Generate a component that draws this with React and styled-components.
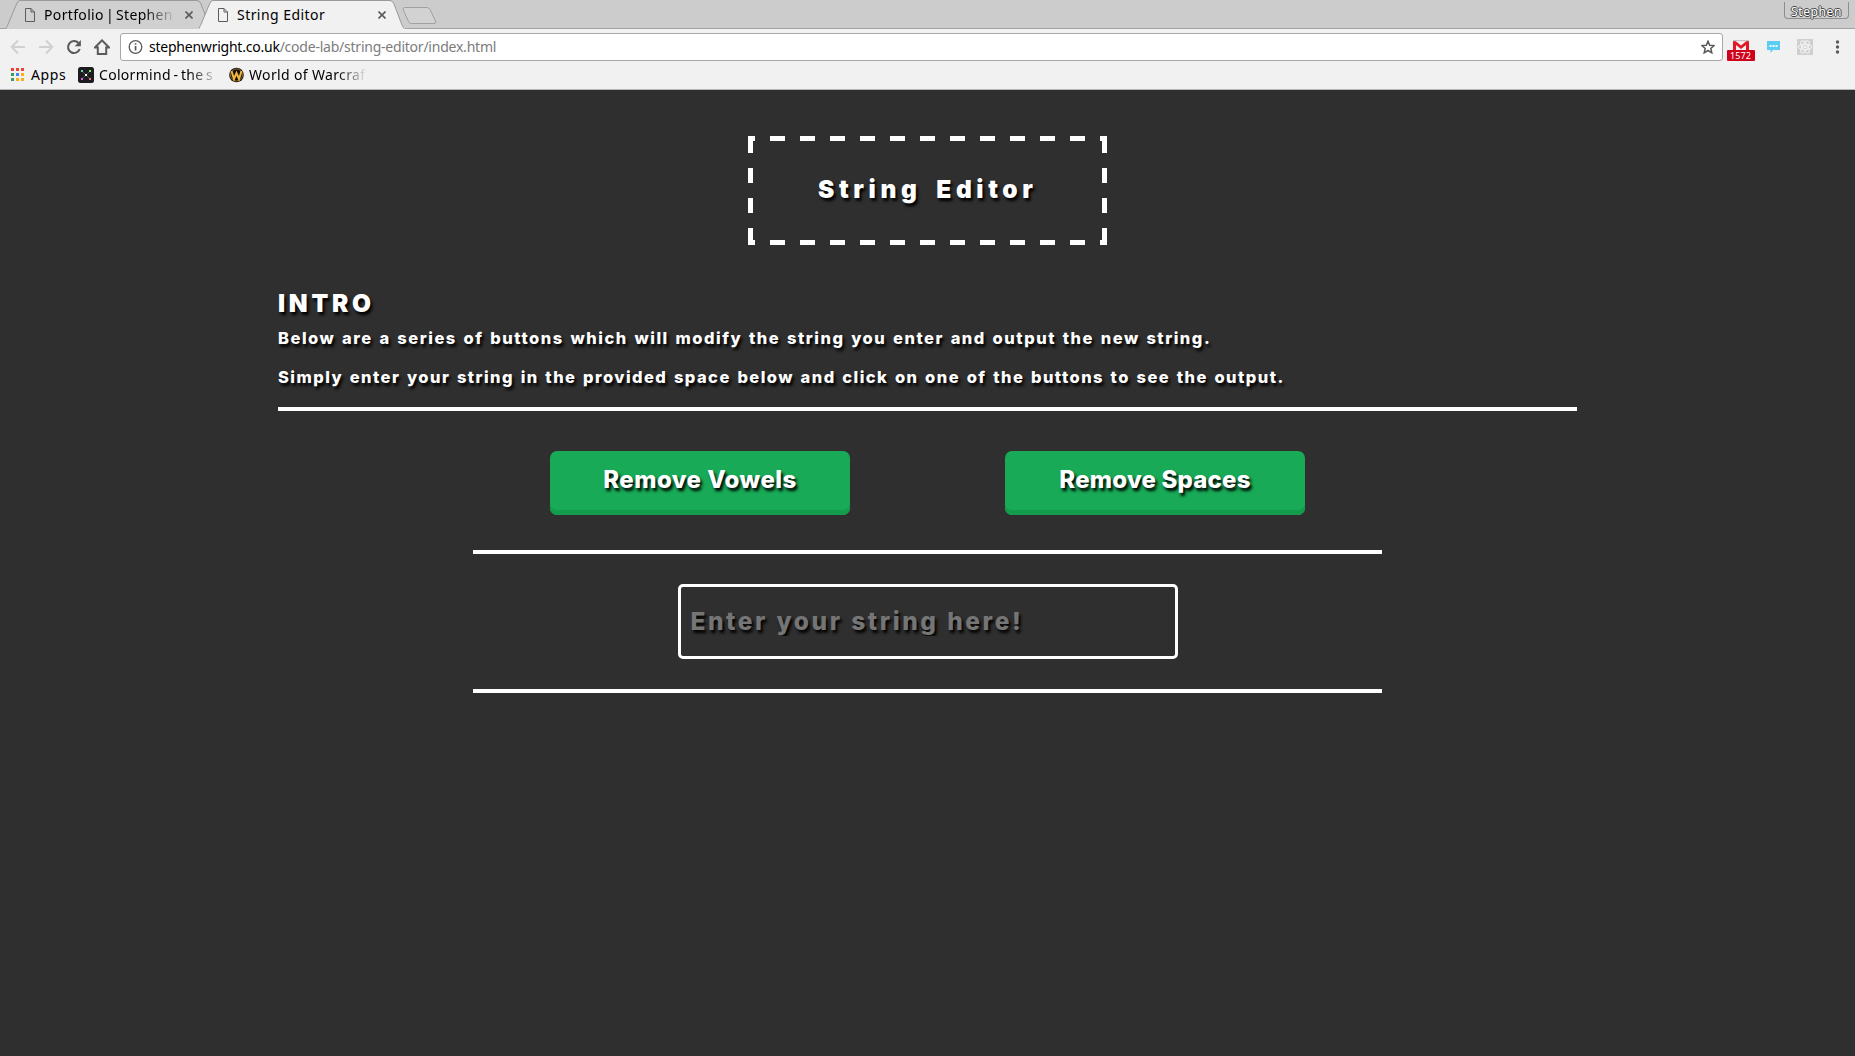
import React from "react";
import styled, { createGlobalStyle } from "styled-components";

const Global = createGlobalStyle`
  * { box-sizing: border-box; }
  body { margin: 0; background: #2f2f2f; overflow: hidden; }
  p, h1, h2 { margin: 0; }
`;

const Window = styled.div`
  height: 1056px;
  display: flex;
  flex-direction: column;
  background: #2f2f2f;
  font-family: "Noto Sans", "Open Sans", sans-serif;
  font-size: 14px;
  color: #000;
`;

const TabStrip = styled.header`
  height: 29px;
  flex: none;
  display: flex;
  padding-left: 6px;
  background: #ccc;
  border-bottom: 1px solid #a3a3a3;
`;

const Tab = styled.div`
  position: relative;
  z-index: ${(p) => (p.$active ? 2 : 1)};
  width: 206px;
  height: 29px;
  margin-right: -13px;
  padding: 0 14px 0 19px;
  display: flex;
  align-items: center;
  flex: none;
`;

const TabShape = styled.svg`
  position: absolute;
  inset: 0;
`;

const TabTitle = styled.span`
  position: relative;
  width: 132px;
  margin-left: 9px;
  line-height: 28px;
  white-space: nowrap;
  letter-spacing: ${(p) => p.$spacing};
  word-spacing: ${(p) => (p.$fade ? "-2px" : "0")};
  ${(p) => p.$fade && "mask-image: linear-gradient(90deg, #000 100px, transparent 132px);"}
`;

const Glyph = styled.svg`
  position: relative;
  flex: none;
  display: block;
`;

const NewTab = styled(Glyph)`
  margin: 6px 0 0 10px;
`;

const Profile = styled.div`
  margin: 2px 6px 0 auto;
  width: 65px;
  height: 17px;
  border: 1px solid #8e8e8e;
  border-top: 0;
  border-radius: 0 0 4px 4px;
  color: #fff;
  font-size: 12px;
  letter-spacing: 0.6px;
  line-height: 19px;
  text-align: center;
  text-shadow: 1px 0 #444, -1px 0 #444, 0 1px #444, 0 -1px #444;
`;

const Toolbar = styled.div`
  height: 36px;
  flex: none;
  display: flex;
  align-items: center;
  padding: 0 10px;
  background: #f1f1f1;
`;

const NavButtons = styled.nav`
  display: flex;
  gap: 12px;
  width: 110px;
`;

const Omnibox = styled.div`
  width: 1603px;
  height: 28px;
  display: flex;
  align-items: center;
  padding: 0 7px;
  background: #fff;
  border: 1px solid #a8a8a8;
  border-radius: 3px;
`;

const Url = styled.span`
  flex: 1;
  margin-left: 6px;
  padding-bottom: 2px;
  color: #7c7c7c;
  white-space: nowrap;
  letter-spacing: -0.23px;
  b { font-weight: 400; color: #000; }
`;

const Extensions = styled.div`
  flex: 1;
  display: flex;
  align-items: center;
  padding-left: 4px;
`;

const Mail = styled.div`
  width: 28px;
  height: 22px;
  display: flex;
  flex-direction: column;
  align-items: center;
  margin: 8px 12px 0 0;
`;

const Badge = styled.span`
  width: 28px;
  height: 11px;
  margin-top: -1px;
  position: relative;
  border-radius: 1px;
  background: #d0021b;
  color: #fff;
  font-size: 9px;
  line-height: 11px;
  padding-left: 3px;
  letter-spacing: 0.1px;
`;

const Bookmarks = styled.div`
  height: 25px;
  flex: none;
  display: flex;
  align-items: center;
  padding: 0 0 5px 11px;
  background: #f1f1f1;
  border-bottom: 1px solid #b6b6b6;
`;

const Bookmark = styled.div`
  display: flex;
  align-items: center;
  gap: ${(p) => p.$gap}px;
  width: ${(p) => p.$width}px;
  line-height: 17px;
`;

const BookmarkLabel = styled.span`
  flex: 1;
  padding-bottom: 1px;
  white-space: nowrap;
  letter-spacing: ${(p) => p.$spacing};
  word-spacing: ${(p) => p.$words || "0"};
  ${(p) => p.$fade && `mask-image: linear-gradient(90deg, #000 ${p.$fade - 30}px, transparent ${p.$fade}px);`}
`;

const Page = styled.main`
  flex: 1;
  display: flex;
  flex-direction: column;
  align-items: center;
  padding-top: 46px;
  font-family: Inter, Roboto, sans-serif;
  font-weight: 800;
  color: #fff;
  text-shadow: 2px 3px 3px #000;
`;

const dash = "#fff 0 15px, transparent 15px 30px";

const TitleBox = styled.h1`
  width: 359px;
  height: 109px;
  padding: 32px 0 0 70px;
  background:
    repeating-linear-gradient(90deg, ${dash}) -8px 0 / 390px 5px repeat-x,
    repeating-linear-gradient(90deg, ${dash}) -8px 100% / 390px 5px repeat-x,
    repeating-linear-gradient(180deg, ${dash}) 0 2px / 5px 120px no-repeat,
    repeating-linear-gradient(180deg, ${dash}) 100% 2px / 5px 120px no-repeat;
  font-size: 24.5px;
  line-height: 42px;
  font-weight: 900;
  letter-spacing: 4.6px;
  word-spacing: 5.5px;
  white-space: nowrap;
`;

const Intro = styled.section`
  width: 1299px;
  height: 121px;
  margin-top: 45px;
  border-bottom: 4px solid #fff;
`;

const IntroHeading = styled.h2`
  font-size: 24.5px;
  line-height: 27px;
  font-weight: 900;
  letter-spacing: 3.7px;
`;

const Paragraph = styled.p`
  margin-top: ${(p) => p.$top}px;
  font-size: 16.5px;
  line-height: 20px;
  white-space: nowrap;
  letter-spacing: ${(p) => p.$spacing};
  word-spacing: 1.6px;
`;

const Actions = styled.section`
  width: 909px;
  height: 143px;
  padding: 40px 77px 0;
  display: flex;
  justify-content: space-between;
  border-bottom: 4px solid #fff;
`;

const ActionButton = styled.button`
  width: 300px;
  height: 64px;
  padding: 0 0 8px;
  border: 0;
  border-radius: 7px;
  background: #18aa56;
  box-shadow: inset 0 -5px #139c4c;
  font: 800 24px Inter, Roboto, sans-serif;
  color: #fff;
  text-shadow: 2px 3px 3px #000;
  letter-spacing: ${(p) => p.$spacing};
`;

const Entry = styled.section`
  width: 909px;
  height: 139px;
  padding-top: 30px;
  display: flex;
  justify-content: center;
  border-bottom: 4px solid #fff;
`;

const StringInput = styled.input`
  width: 500px;
  height: 75px;
  padding: 0 9px 2px 10px;
  border: 3px solid #fff;
  border-radius: 5px;
  outline: 0;
  background: transparent;
  color: #fff;
  font: 800 24.5px Inter, Roboto, sans-serif;
  letter-spacing: 2.55px;
  word-spacing: 0.8px;
  text-shadow: 2px 3px 3px #000;
  &::placeholder { color: #757575; opacity: 1; }
`;

const PageIcon = () => (
  <Glyph width="10" height="14" viewBox="0 0 10 14" fill="none" stroke="#5c5c5c">
    <path d="M.5.5H6L9.5 4v9.500H.5zM6 .5V4h3.500" />
  </Glyph>
);

const CloseIcon = () => (
  <Glyph width="8" height="8" viewBox="0 0 8 8" stroke="#5a5a5a" strokeWidth="1.6">
    <path d="M.5.5l7 7M7.5.5l-7 7" />
  </Glyph>
);

const BrowserTab = ({ title, active, fade, spacing }) => (
  <Tab $active={active}>
    <TabShape width="206" height="29" viewBox="0 0 206 29">
      <path d="M0 29L1.500 25.500L10.500 4Q12 .5 14 .5H191Q193.500 .5 195 4L203 25L206 29Z" fill={active ? "#f1f1f1" : "#d0d0d0"} />
      <path d="M0 28.500L1.500 25.500L10.500 4Q12 .5 14 .5H191Q193.500 .5 195 4L203 25L205 28.500" fill="none" stroke="#999" />
    </TabShape>
    <PageIcon />
    <TabTitle $fade={fade} $spacing={spacing}>{title}</TabTitle>
    <Spacer />
    <CloseIcon />
    <TabEnd />
  </Tab>
);

const Spacer = styled.span`flex: 1;`;
const TabEnd = styled.span`width: 5px;`;

const Nav = () => (
  <NavButtons>
    <Glyph width="16" height="16" viewBox="0 0 16 16" fill="none" stroke="#d0d0d0" strokeWidth="2"><path d="M15 8H2.500M8 1.500L1.700 8 8 14.500" /></Glyph>
    <Glyph width="16" height="16" viewBox="0 0 16 16" fill="none" stroke="#d0d0d0" strokeWidth="2"><path d="M1 8h12.500M8 1.500L14.300 8 8 14.500" /></Glyph>
    <Glyph width="16" height="16" viewBox="0 0 16 16"><path d="M13.700 10A6 6 0 1 1 12.500 4" fill="none" stroke="#5a5a5a" strokeWidth="2.100" /><path d="M14.900 1v6.200H8.700z" fill="#5a5a5a" /></Glyph>
    <Glyph width="16" height="16" viewBox="0 0 16 16" fill="none" stroke="#5a5a5a" strokeWidth="2"><path d="M1 8.500h2.800V15h8.400V8.500H15L8 1.400z" /></Glyph>
  </NavButtons>
);

const appColors = ["#ea4335", "#ea4335", "#ea4335", "#34a058", "#4285f4", "#fbb010", "#34a058", "#fbb010", "#fbb010"];

export default function App() {
  return (
    <Window>
      <Global />
      <TabStrip>
        <BrowserTab title="Portfolio | Stephen" fade spacing="0.35px" />
        <BrowserTab title="String Editor" active spacing="0.45px" />
        <NewTab width="36" height="19" viewBox="0 0 36 19">
          <path d="M2.500 1.500H25Q27 1.500 28 3.500L33.500 15Q34.500 17.500 32 17.500H9.500Q7.500 17.500 6.500 15.500L1.300 4Q.3 1.500 2.500 1.500Z" fill="#d2d2d2" stroke="#a0a0a0" />
        </NewTab>
        <Profile>Stephen</Profile>
      </TabStrip>
      <Toolbar>
        <Nav />
        <Omnibox>
          <Glyph width="15" height="15" viewBox="0 0 15 15"><circle cx="7.500" cy="7" r="6.300" fill="none" stroke="#5a5a5a" strokeWidth="1.300" /><path d="M6.700 6h1.700v4.500H6.700zM6.700 3.200h1.700v1.600H6.700z" fill="#5a5a5a" /></Glyph>
          <Url><b>stephenwright.co.uk</b>/code-lab/string-editor/index.html</Url>
          <Glyph width="14" height="14" viewBox="0 0 14 14" fill="none" stroke="#5a5a5a" strokeWidth="1.500"><path d="M7 1.200l1.700 4 4.400.4-3.300 2.900 1 4.300L7 10.500l-3.800 2.300 1-4.300L.9 5.600l4.400-.4z" /></Glyph>
        </Omnibox>
        <Extensions>
          <Mail>
            <Glyph width="16" height="11" viewBox="0 0 16 11"><path d="M0 0h16v11H0z" fill="#f7f0f0" /><path d="M0 1h2.500L8 5.500 13.500 1H16v10h-3V5L8 9 3 5v6H0z" fill="#e01828" /><path d="M0 0h16v1.200H0z" fill="#c9c0c0" /></Glyph>
            <Badge>1572</Badge>
          </Mail>
          <Glyph width="13" height="12" viewBox="0 0 13 12"><path d="M0 0h13v9H6l-2.500 3V9H0z" fill="#5bcdf3" /><path d="M2.500 4h2v2h-2zM5.500 4h2v2h-2zM8.500 4h2v2h-2z" fill="#effbff" /></Glyph>
          <ReactBadge width="16" height="16" viewBox="0 0 16 16"><path d="M0 0h16v16H0z" fill="#cfcfcf" /><g fill="none" stroke="#f5f5f5"><ellipse cx="8" cy="8" rx="6.800" ry="2.700" /><ellipse cx="8" cy="8" rx="6.800" ry="2.700" transform="rotate(60 8 8)" /><ellipse cx="8" cy="8" rx="6.800" ry="2.700" transform="rotate(120 8 8)" /></g><circle cx="8" cy="8" r="1.300" fill="#f5f5f5" /></ReactBadge>
          <Spacer />
          <Glyph width="15" height="16" viewBox="0 0 15 16" fill="#5a5a5a"><circle cx="7.500" cy="3" r="1.700" /><circle cx="7.500" cy="8" r="1.700" /><circle cx="7.500" cy="13" r="1.700" /></Glyph>
        </Extensions>
      </Toolbar>
      <Bookmarks>
        <Bookmark $width={67} $gap={7}>
          <Glyph width="13" height="13" viewBox="0 0 13 13">
            {appColors.map((c, i) => <rect key={i} x={(i % 3) * 5} y={Math.floor(i / 3) * 5} width="3" height="3" fill={c} />)}
          </Glyph>
          <BookmarkLabel $spacing="0.6px">Apps</BookmarkLabel>
        </Bookmark>
        <Bookmark $width={151} $gap={5}>
          <Glyph width="16" height="16" viewBox="0 0 16 16">
            <rect width="16" height="16" rx="2.500" fill="#1c1c20" />
            <path d="M5 5l6 6M11 5l-6 6" stroke="#555" />
            <path d="M3 3h2v2H3z" fill="#62d6a0" /><path d="M11 3h2v2h-2z" fill="#8be36a" /><path d="M3 11h2v2H3z" fill="#d86adf" /><path d="M11 11h2v2h-2z" fill="#f06a8a" /><path d="M7 7h2v2H7z" fill="#fff" />
          </Glyph>
          <BookmarkLabel $fade={120} $words="-1.3px" $spacing="0.3px">Colormind - the s</BookmarkLabel>
        </Bookmark>
        <Bookmark $width={137} $gap={5}>
          <Glyph width="15" height="16" viewBox="0 0 15 16">
            <circle cx="7.500" cy="8" r="7.300" fill="#171008" />
            <circle cx="7.500" cy="8" r="6" fill="none" stroke="#8a6a35" />
            <path d="M2.500 4l2.500 8 2.500-6 2.500 6 2.500-8" fill="none" stroke="#f0b840" strokeWidth="2" />
          </Glyph>
          <BookmarkLabel $fade={118} $spacing="0.35px">World of Warcraf</BookmarkLabel>
        </Bookmark>
      </Bookmarks>
      <Page>
        <TitleBox>String Editor</TitleBox>
        <Intro>
          <IntroHeading>INTRO</IntroHeading>
          <Paragraph $top={11} $spacing="1.51px">Below are a series of buttons which will modify the string you enter and output the new string.</Paragraph>
          <Paragraph $top={19} $spacing="1.44px">Simply enter your string in the provided space below and click on one of the buttons to see the output.</Paragraph>
        </Intro>
        <Actions>
          <ActionButton $spacing="0.45px">Remove Vowels</ActionButton>
          <ActionButton $spacing="0.2px">Remove Spaces</ActionButton>
        </Actions>
        <Entry>
          <StringInput placeholder="Enter your string here!" />
        </Entry>
      </Page>
    </Window>
  );
}

const ReactBadge = styled(Glyph)`
  margin-left: 17px;
`;
